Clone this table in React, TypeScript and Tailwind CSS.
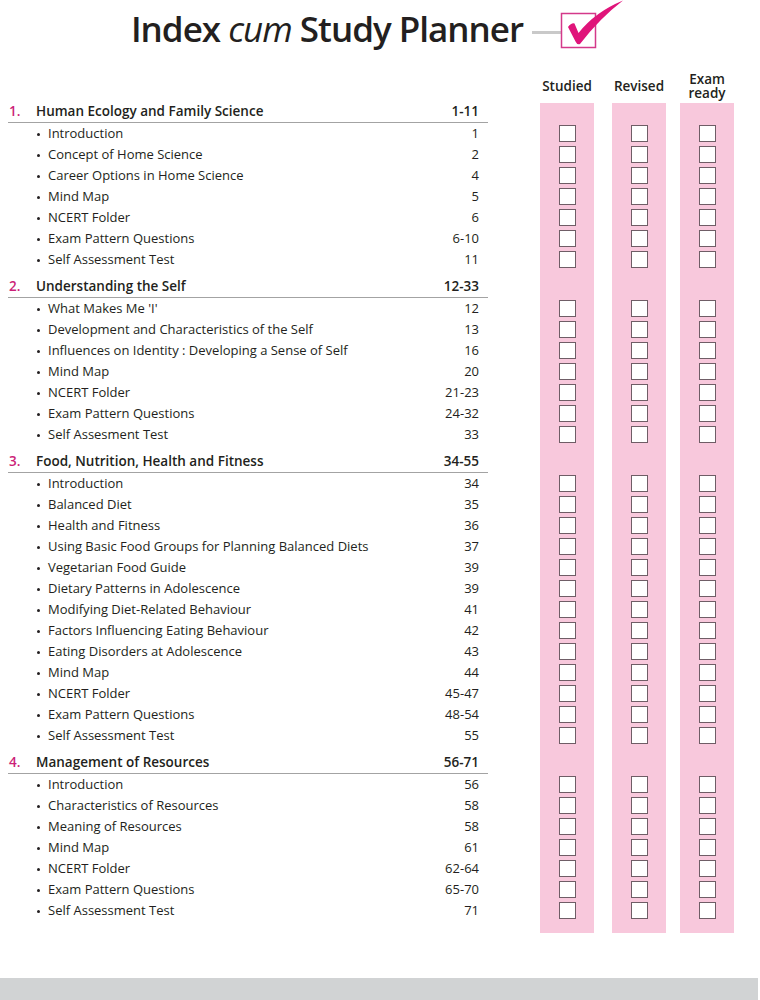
const SECTIONS = [
  {
    num: "1.",
    title: "Human Ecology and Family Science",
    pages: "1-11",
    items: [
      ["Introduction", "1"],
      ["Concept of Home Science", "2"],
      ["Career Options in Home Science", "4"],
      ["Mind Map", "5"],
      ["NCERT Folder", "6"],
      ["Exam Pattern Questions", "6-10"],
      ["Self Assessment Test", "11"],
    ],
  },
  {
    num: "2.",
    title: "Understanding the Self",
    pages: "12-33",
    items: [
      ["What Makes Me 'I'", "12"],
      ["Development and Characteristics of the Self", "13"],
      ["Influences on Identity : Developing a Sense of Self", "16"],
      ["Mind Map", "20"],
      ["NCERT Folder", "21-23"],
      ["Exam Pattern Questions", "24-32"],
      ["Self Assesment Test", "33"],
    ],
  },
  {
    num: "3.",
    title: "Food, Nutrition, Health and Fitness",
    pages: "34-55",
    items: [
      ["Introduction", "34"],
      ["Balanced Diet", "35"],
      ["Health and Fitness", "36"],
      ["Using Basic Food Groups for Planning Balanced Diets", "37"],
      ["Vegetarian Food Guide", "39"],
      ["Dietary Patterns in Adolescence", "39"],
      ["Modifying Diet-Related Behaviour", "41"],
      ["Factors Influencing Eating Behaviour", "42"],
      ["Eating Disorders at Adolescence", "43"],
      ["Mind Map", "44"],
      ["NCERT Folder", "45-47"],
      ["Exam Pattern Questions", "48-54"],
      ["Self Assessment Test", "55"],
    ],
  },
  {
    num: "4.",
    title: "Management of Resources",
    pages: "56-71",
    items: [
      ["Introduction", "56"],
      ["Characteristics of Resources", "58"],
      ["Meaning of Resources", "58"],
      ["Mind Map", "61"],
      ["NCERT Folder", "62-64"],
      ["Exam Pattern Questions", "65-70"],
      ["Self Assessment Test", "71"],
    ],
  },
];

function Box() {
  return <div className="w-[17px] h-[17px] bg-white border border-[#6f5d66]" />;
}

// three pink tick columns, one slice per row
function Cells({ boxes, top = false }: { boxes?: boolean; top?: boolean }) {
  const cls = `w-[54px] bg-[#f8c8dc] flex items-center justify-center ${top ? "mt-[2px]" : ""}`;
  return (
    <>
      <div className={cls}>{boxes && <Box />}</div>
      <div className={`${cls} ml-[18px]`}>{boxes && <Box />}</div>
      <div className={`${cls} ml-[14px]`}>{boxes && <Box />}</div>
    </>
  );
}

function CheckLogo() {
  return (
    <svg width="68" height="50" viewBox="0 0 68 50" className="block">
      <rect x="2.5" y="13.5" width="34" height="34" fill="white" stroke="#d4398a" strokeWidth="1.5" />
      <path
        d="M9 27 Q12.5 22.5 15.5 23.5 L19.5 33 Q36 12 64 0.5 Q41 18 21 44 Q18 45 16.5 41.5 Z"
        fill="#e0147a"
      />
    </svg>
  );
}

export default function App() {
  return (
    <div
      className="w-[760px] h-[1000px] bg-white text-[#231f20] flex flex-col overflow-hidden"
      style={{ fontFamily: "'Open Sans', 'Noto Sans', sans-serif" }}
    >
      <div className="h-[65px] w-[758px] flex justify-center items-start">
        <h1 className="mt-[5px] text-[35px] leading-[48px] font-semibold tracking-[-1px] whitespace-nowrap">
          Index <i className="font-normal">cum</i> Study Planner
        </h1>
        <div className="ml-[9px] mt-[31px] w-[29px] h-[3px] bg-[#c9c9c9]" />
        <div className="-ml-[2px]">
          <CheckLogo />
        </div>
      </div>

      <div className="h-[36px] flex text-[13.5px] font-semibold leading-[14px]">
        <div className="w-[540px]" />
        <div className="w-[54px] pt-[5px] flex items-center justify-center text-center">Studied</div>
        <div className="w-[54px] ml-[18px] pt-[5px] flex items-center justify-center text-center">Revised</div>
        <div className="w-[54px] ml-[14px] pt-[5px] flex flex-col items-center justify-center text-center">
          <span>Exam</span>
          <span>ready</span>
        </div>
      </div>

      {SECTIONS.map((s, si) => (
        <div key={s.num}>
          <div className={`flex ${si === 0 ? "h-[22px]" : "h-[28px]"}`}>
            <div className="w-[540px] flex items-end">
              <div className="ml-[8px] w-[480px] flex pl-[1px] pr-[9px] pb-[1px] border-b border-[#a3a3a3] text-[13.5px] leading-5 font-semibold">
                <span className="w-[27px] text-[#cc1f78]">{s.num}</span>
                <span>{s.title}</span>
                <span className="ml-auto">{s.pages}</span>
              </div>
            </div>
            <Cells top={si === 0} />
          </div>
          {s.items.map(([t, p], i) => (
            <div key={i} className="flex h-[21px]">
              <div className="w-[540px] flex items-center text-[13px]">
                <div className="ml-[8px] w-[480px] flex items-center pr-[9px]">
                  <span className="ml-[29px] mr-[8px] w-[3px] h-[3px] rounded-full bg-[#231f20] mt-[2px]" />
                  <span>{t}</span>
                  <span className="ml-auto">{p}</span>
                </div>
              </div>
              <Cells boxes />
            </div>
          ))}
        </div>
      ))}

      <div className="flex h-[12px]">
        <div className="w-[540px]" />
        <Cells />
      </div>

      <div className="mt-auto h-[22px] w-[758px] bg-[#d1d3d4]" />
    </div>
  );
}
